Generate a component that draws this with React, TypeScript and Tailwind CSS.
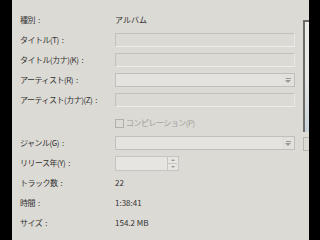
import React from "react";

const font = { fontFamily: '"Noto Sans CJK JP", "Noto Sans", sans-serif' };

function Entry() {
  return (
    <div className="h-[14px] w-[180px] border border-t-[#c4c1bc] border-l-[#c4c1bc] border-b-[#efede9] border-r-[#e9e7e3] bg-[#dcdad5]" />
  );
}

function Combo() {
  return (
    <div className="h-[14px] w-[180px] flex border border-[#c2bfba] bg-[#e5e3df]">
      <div className="flex-1" />
      <div className="w-[12px] flex flex-col items-center justify-center bg-[#e2e0dc]">
        <div className="w-[5px] h-px bg-[#9a9894] mb-px" />
        <div className="w-0 h-0 border-l-[3px] border-r-[3px] border-t-[3px] border-l-transparent border-r-transparent border-t-[#9a9894]" />
      </div>
    </div>
  );
}

function Spinner() {
  return (
    <div className="h-[15px] w-[64px] flex border border-[#c8c5c0] bg-[#e7e5e1]">
      <div className="flex-1" />
      <div className="w-[10px] mr-[1px] flex flex-col border-l border-[#c8c5c0]">
        <div className="flex-1 flex items-center justify-center border-b border-[#c8c5c0]">
          <div className="w-0 h-0 border-l-[2px] border-r-[2px] border-b-[2px] border-l-transparent border-r-transparent border-b-[#9a9894]" />
        </div>
        <div className="flex-1 flex items-center justify-center">
          <div className="w-0 h-0 border-l-[2px] border-r-[2px] border-t-[2px] border-l-transparent border-r-transparent border-t-[#9a9894]" />
        </div>
      </div>
    </div>
  );
}

function Row({ label, children }: { label?: string; children?: React.ReactNode }) {
  return (
    <div className="h-[20px] flex items-center">
      <div className="w-[95px] text-[8px] leading-none text-[#333] whitespace-nowrap tracking-[-0.5px]">
        {label ? (
          <>
            {label}
            <span className="ml-[3px]">:</span>
          </>
        ) : null}
      </div>
      <div className="flex items-center text-[8px] leading-none text-[#333]">{children}</div>
    </div>
  );
}

export default function App() {
  return (
    <div className="w-[320px] h-[240px] flex bg-black overflow-hidden" style={font}>
      <div className="w-[12px] bg-black" />
      <div className="w-[297px] bg-[#dcdad5] flex">
        <div className="flex flex-col pt-[10px] pl-[8px]">
          <Row label="種別"><span>アルバム</span></Row>
          <Row label="タイトル(T)"><Entry /></Row>
          <Row label="タイトル(カナ)(K)"><Entry /></Row>
          <Row label="アーティスト(R)"><Combo /></Row>
          <Row label="アーティスト(カナ)(Z)"><Entry /></Row>
          <div className="h-[3px]" />
          <Row>
            <div className="flex items-center gap-[2px] text-[#a3a09b] tracking-[-0.5px]">
              <div className="w-[9px] h-[9px] border border-[#b3b0ab] bg-[#dcdad5]" />
              <span>コンピレーション(P)</span>
            </div>
          </Row>
          <Row label="ジャンル(G)"><Combo /></Row>
          <Row label="リリース年(Y)"><Spinner /></Row>
          <Row label="トラック数"><span>22</span></Row>
          <Row label="時間"><span>1:38:41</span></Row>
          <Row label="サイズ"><span>154.2 MB</span></Row>
        </div>
        <div className="flex-1 flex flex-col pt-[20px] pl-[8px]">
          <div className="h-[112px] border-l-2 border-t-2 border-[#6e6c69] bg-gradient-to-b from-[#ecebe8] via-[#e8e8e6] to-[#c9d4da]" />
          <div className="h-[14px] mt-[5px] border-l border-t border-b border-[#b9b6b1] bg-[#dcdad5]" />
        </div>
      </div>
      <div className="flex-1 bg-black" />
    </div>
  );
}
